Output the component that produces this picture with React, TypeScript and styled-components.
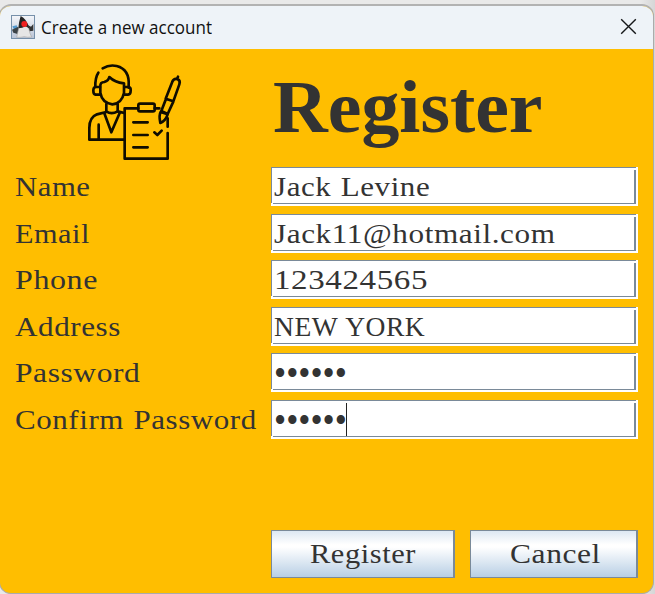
import React, { useLayoutEffect, useRef, useState } from 'react';
import styled, { createGlobalStyle, css } from 'styled-components';

const GlobalStyle = createGlobalStyle`
  * { box-sizing: border-box; }
  html, body { margin: 0; padding: 0; overflow: hidden; }
`;

const Desktop = styled.div`
  width: 655px;
  height: 594px;
  overflow: hidden;
  padding-top: 4px;
  background: linear-gradient(90deg, #e9e9e9 0, #e9e9e9 640px, #d6d6d6 655px);
`;

const Window = styled.main`
  width: 655px;
  height: 590px;
  margin-left: -1px;
  border: 1px solid #ababab;
  border-top: 2px solid #b2b2b2;
  border-radius: 12px;
  overflow: hidden;
  background: #ffbe00;
  display: flex;
  flex-direction: column;
`;

const TitleBar = styled.header`
  height: 43px;
  flex: none;
  display: flex;
  align-items: center;
  padding: 0 16px 2px 11px;
  background: #eef3f8;
`;

const DukeIcon = styled.svg`
  width: 24px;
  height: 24px;
  flex: none;
  margin-right: 6px;
`;

const CloseButton = styled.button`
  margin-left: auto;
  border: 0;
  padding: 0;
  width: 17px;
  height: 17px;
  background: none;
  svg { display: block; }
`;

const Form = styled.form`
  flex: 1;
  display: flex;
  flex-direction: column;
  padding: 0 15px;
`;

const Heading = styled.div`
  height: 118px;
  display: grid;
  grid-template-columns: 256px 1fr;
`;

const Emblem = styled.svg`
  width: 120px;
  height: 110px;
  margin: 6px 0 0 60px;
`;

const Title = styled.h1`
  margin: 15px 0 0 2px;
  font: bold 75px/86px 'Liberation Serif', serif;
  color: #333;
`;

const Fields = styled.div`
  display: grid;
  grid-template-columns: 256px 367px;
  grid-template-rows: 47px 46px 47px 46px 47px 46px;
  font: 27px/39px 'Liberation Serif', serif;
  color: #333;
`;

const Label = styled.label`
  height: 39px;
  padding-top: 1px;
`;

const Input = styled.div`
  height: 39px;
  padding: 1px 0 0 3px;
  display: flex;
  align-items: flex-start;
  background:
    linear-gradient(#7a8a99, #7a8a99) 0 0 / 365px 1px no-repeat,
    linear-gradient(#7a8a99, #7a8a99) 0 0 / 1px 36px no-repeat,
    linear-gradient(#7a8a99, #7a8a99) 2px 36px / 363px 1px no-repeat,
    linear-gradient(#7a8a99, #7a8a99) 363px 3px / 2px 34px no-repeat,
    #fff;
`;

const Caret = styled.span`
  width: 1px;
  height: 33px;
  margin: 2px 0 0 -1px;
  background: #222;
`;

const Actions = styled.div`
  display: grid;
  grid-template-columns: 184px 168px;
  gap: 15px;
  margin: 84px 0 0 256px;
`;

const Button = styled.button<{ $inset: number }>`
  height: 48px;
  padding: 0 0 0 ${(p) => p.$inset}px;
  border: 1px solid #7a8a99;
  border-right-width: 2px;
  background: linear-gradient(#dde8f3 0%, #fff 30%, #fff 35%, #b8cfe5 100%);
  font: 27px/48px 'Liberation Serif', serif;
  color: #333;
  display: flex;
  align-items: center;
  justify-content: flex-start;
`;

const FitBox = styled.span<{ $width: number }>`
  display: block;
  flex: none;
  width: ${(p) => p.$width}px;
  white-space: nowrap;
  text-align: left;
`;

const FitText = styled.span<{ $tracking: number; $caption?: boolean; $mask?: boolean }>`
  display: inline-block;
  transform-origin: 0 50%;
  letter-spacing: ${(p) => p.$tracking}px;
  word-spacing: 1px;
  ${(p) => p.$caption && css`
    font: 17.5px/26px 'Open Sans', 'Noto Sans', sans-serif;
    word-spacing: 0;
    color: #111;
  `}
  ${(p) => p.$mask && css`
    font-size: 38px;
  `}
`;

type FitProps = {
  text: string;
  width: number;
  tracking?: number;
  caption?: boolean;
  mask?: boolean;
};

// Stretches a run of text horizontally to the given width.
function Fit({ text, width, tracking = 0.5, caption, mask }: FitProps) {
  const ref = useRef<HTMLSpanElement>(null);
  const [scale, setScale] = useState(1);
  useLayoutEffect(() => {
    if (ref.current) setScale(width / ref.current.offsetWidth);
  }, [width, text]);
  return (
    <FitBox $width={width}>
      <FitText
        ref={ref}
        $tracking={tracking}
        $caption={caption}
        $mask={mask}
        style={{ transform: `scaleX(${scale})` }}
      >
        {text}
      </FitText>
    </FitBox>
  );
}

type Row = { label: string; labelWidth: number; value: string; valueWidth: number; mask?: boolean; caret?: boolean };

const rows: Row[] = [
  { label: 'Name', labelWidth: 75, value: 'Jack Levine', valueWidth: 156 },
  { label: 'Email', labelWidth: 75, value: 'Jack11@hotmail.com', valueWidth: 282 },
  { label: 'Phone', labelWidth: 83, value: '123424565', valueWidth: 154 },
  { label: 'Address', labelWidth: 106, value: 'NEW YORK', valueWidth: 151 },
  { label: 'Password', labelWidth: 126, value: '••••••', valueWidth: 73, mask: true },
  { label: 'Confirm Password', labelWidth: 242, value: '••••••', valueWidth: 73, mask: true, caret: true },
];

export default function App() {
  return (
    <>
      <GlobalStyle />
      <Desktop>
        <Window>
          <TitleBar>
            <DukeIcon viewBox="0 0 72 72">
              <defs>
                <linearGradient id="tile" x1="0" y1="0" x2="0" y2="1">
                  <stop offset="0" stopColor="#f4f6fa" />
                  <stop offset="1" stopColor="#b9c4d6" />
                </linearGradient>
              </defs>
              <rect x="1.5" y="1.5" width="69" height="69" fill="url(#tile)" stroke="#7690aa" strokeWidth="3" />
              <path d="M4 34L17 31L22 42L10 46Z" fill="#5399ce" />
              <path d="M3 44L20 36L28 45L22 58L7 53Z" fill="#3c4347" />
              <path d="M50 30L60 35L67 27V47L55 49Z" fill="#333" />
              <path d="M24 36L52 34Q56 57 62 66Q49 68 40 65Q28 68 17 67Q20 53 24 36Z" fill="#e6e6e6" stroke="#a9a9a9" strokeWidth="2" />
              <path d="M29 3Q46 10 56 41L44 34Q34 40 22 40Q24 18 29 3Z" fill="#252525" />
              <ellipse cx="40" cy="27" rx="9" ry="9" fill="#ef2020" />
            </DukeIcon>
            <Fit text="Create a new account" width={171} tracking={0} caption />
            <CloseButton type="button" aria-label="Close">
              <svg width="17" height="17" viewBox="0 0 17 17">
                <path d="M1.2 1.2L15.8 15.8M15.8 1.2L1.2 15.8" stroke="#151719" strokeWidth="1.4" fill="none" />
              </svg>
            </CloseButton>
          </TitleBar>
          <Form>
            <Heading>
              <Emblem viewBox="0 0 360 330" fill="none" stroke="#100d00" strokeWidth="8" strokeLinecap="round" strokeLinejoin="round">
                <path d="M83 40Q103 28 125 33Q164 43 161 91V98M70 53Q60 68 61 96" />
                <path d="M76 95Q75 81 88 81Q101 77 103 66Q119 82 147 85V114Q140 146 112 148Q81 143 76 113Z" />
                <path d="M75 96H61Q55 97 55 107Q55 118 62 119H75M148 96H161Q168 97 167 107Q167 118 159 119H148" />
                <path d="M94 147V169Q109 180 128 169V147" />
                <path d="M94 171L66 178Q43 187 43 219V254H148M88 175L109 232L134 174M128 169L148 174M71 209V250" />
                <path d="M190 160H149V311H278V234M278 215V190M239 160H253" />
                <rect x="190" y="146" width="49" height="23" rx="5" />
                <path d="M175 202H218M175 240H218M175 277H218M238 232L247 240L260 227" />
                <path d="M272 131L292 80Q297 69 308 73Q317 77 313 88L295 139L272 131ZM306 72L309 65M272 134L259 168L278 177L295 140M257 171Q251 181 256 204Q272 197 278 178L257 171" />
              </Emblem>
              <Title><Fit text="Register" width={270} tracking={0} /></Title>
            </Heading>
            <Fields>
              {rows.map((row) => (
                <React.Fragment key={row.label}>
                  <Label><Fit text={row.label} width={row.labelWidth} /></Label>
                  <Input>
                    <Fit text={row.value} width={row.valueWidth} mask={row.mask} tracking={row.mask ? 0 : 0.5} />
                    {row.caret && <Caret />}
                  </Input>
                </React.Fragment>
              ))}
            </Fields>
            <Actions>
              <Button type="button" $inset={38}><Fit text="Register" width={106} /></Button>
              <Button type="button" $inset={39}><Fit text="Cancel" width={91} /></Button>
            </Actions>
          </Form>
        </Window>
      </Desktop>
    </>
  );
}
